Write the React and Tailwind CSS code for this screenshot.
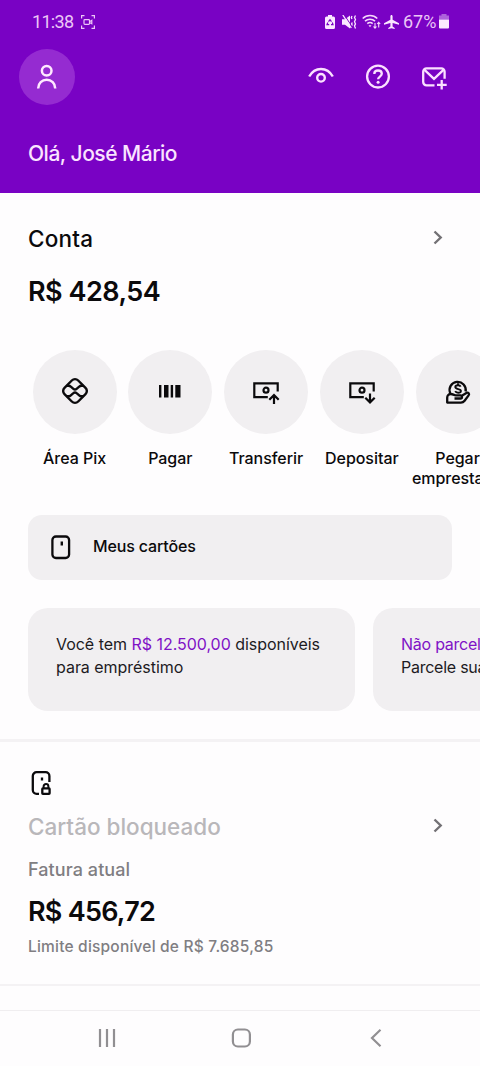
import React from "react";

// Quick actions shown in the horizontal list
const actions = [
  { label: "Área Pix", icon: PixIcon },
  { label: "Pagar", icon: BarcodeIcon },
  { label: "Transferir", icon: TransferIcon },
  { label: "Depositar", icon: DepositIcon },
  { label: "Pegar emprestado", icon: LoanIcon },
];

function PixIcon() {
  return (
    <svg className="-mt-[2px]" width="28" height="28" viewBox="0 0 28 28" fill="none" stroke="#0b0a0c" strokeWidth="2.4" strokeLinejoin="round">
      <path d="M10.8 3.5a4.5 4.5 0 0 1 6.4 0l7.3 7.3a4.5 4.5 0 0 1 0 6.4l-7.3 7.3a4.5 4.5 0 0 1-6.4 0l-7.3-7.3a4.5 4.5 0 0 1 0-6.4z" />
      <path d="M5.8 8.800h1.800c.9 0 1.600.3 2.200.9l2.600 2.200a2.400 2.400 0 0 0 3.200 0l2.600-2.200c.6-.6 1.300-.9 2.200-.9h1.800" />
      <path d="M5.800 19.200h1.800c.9 0 1.600-.3 2.200-.9l2.600-2.200a2.400 2.400 0 0 1 3.200 0l2.600 2.200c.6.6 1.300.9 2.200.9h1.800" />
    </svg>
  );
}

function BarcodeIcon() {
  return (
    <svg className="-mt-px" width="22" height="13" viewBox="0 0 22 13" fill="#0b0a0c">
      <rect x="0" y="0" width="2.4" height="12.5" />
      <rect x="5" y="0" width="4.5" height="12.5" />
      <rect x="11.7" y="0" width="2.4" height="12.5" />
      <rect x="16.3" y="0" width="5.2" height="12.5" />
    </svg>
  );
}

function TransferIcon() {
  return (
    <svg className="-mt-px" width="28" height="24" viewBox="0 0 28 24" fill="none" stroke="#0b0a0c" strokeWidth="2.2">
      <path d="M15.8 17.2H2.3V3.3h23.4v8.2" />
      <circle cx="14" cy="10.2" r="2.5" />
      <path d="M22 24v-8.5M17.3 19.7l4.7-4.6 4.7 4.6" />
    </svg>
  );
}

function DepositIcon() {
  return (
    <svg className="-mt-px" width="28" height="24" viewBox="0 0 28 24" fill="none" stroke="#0b0a0c" strokeWidth="2.2">
      <path d="M15.8 17.2H2.3V3.3h23.4v8.2" />
      <circle cx="14" cy="10.2" r="2.5" />
      <path d="M22 13.5v8.5M17.3 17.8l4.7 4.6 4.7-4.6" />
    </svg>
  );
}

function LoanIcon() {
  return (
    <svg className="-mt-px" width="26" height="26" viewBox="0 0 26 26" fill="none" stroke="#0b0a0c" strokeWidth="2.3" strokeLinejoin="round">
      <path d="M5.2 14.2A8.1 8.1 0 1 1 20.6 12.5" />
      <path d="M15.7 7.6c-.4-.9-1.400-1.400-2.700-1.400-1.600 0-2.700.7-2.700 1.900 0 2.700 5.600 1.300 5.600 3.800 0 1.200-1.200 1.800-2.800 1.800-1.400 0-2.400-.5-2.900-1.500M13 4.300v1.900" strokeWidth="1.9" />
      <path d="M9.5 19.5h6c2 0 2-3.200 0-3.200h-4.700c-1.800 0-3-1.300-4.900-1.300-2.200 0-3.700 1.400-3.700 3.700v4.900h13.700c1.700 0 2.700-.6 3.700-1.900l4-5.300c1.200-1.600-.3-3.400-2.200-2.500l-4.600 2.800" />
    </svg>
  );
}

function CardIcon() {
  return (
    <svg width="20" height="25" viewBox="0 0 20 25" fill="none" stroke="#0b0a0c" strokeWidth="2.3">
      <rect x="1.4" y="1.5" width="16.7" height="21.5" rx="3.5" />
      <path d="M10.8 6.5v4" strokeWidth="2.4" />
    </svg>
  );
}

function BlockedCardIcon() {
  return (
    <svg width="21" height="25" viewBox="0 0 21 25" fill="none" stroke="#0b0a0c" strokeWidth="2.3">
      <path d="M8 22.8H5.6a3.8 3.8 0 0 1-3.8-3.8V5a3.8 3.8 0 0 1 3.8-3.8h9A3.8 3.8 0 0 1 18.4 5v6" />
      <path d="M11 6.5v3" />
      <rect x="11.3" y="17.4" width="7.3" height="5.5" rx=".6" />
      <path d="M12.6 17v-1.5a2.4 2.4 0 0 1 4.8 0V17" strokeWidth="2" />
    </svg>
  );
}

function ChevronRight() {
  return (
    <svg className="-mt-[3px]" width="10" height="15" viewBox="0 0 10 15" fill="none" stroke="#737175" strokeWidth="2.4">
      <path d="M1.5 1.500l6.200 6-6.200 6" />
    </svg>
  );
}

function StatusBar() {
  return (
    <div className="flex h-[43px] items-center justify-between pl-[32px] pr-[31px] text-[#ecc6f6]">
      <div className="flex items-center">
        <span className="w-[49px] whitespace-nowrap font-[Roboto] text-[18px] leading-none tracking-[-0.7px]">11:38</span>
        <svg width="14" height="14" viewBox="0 0 14 14" fill="none" stroke="currentColor" strokeWidth="1.2">
          <path d="M.6 3.5v-2.9h2.9M10.5.6h2.9v2.9M13.4 10.5v2.9h-2.9M3.5 13.4H.6v-2.9" />
          <rect x="3" y="4.7" width="5.5" height="4.6" rx=".8" />
          <path d="M8.5 6.7l2.3-1.4v3.4L8.5 7.5" />
        </svg>
      </div>
      <div className="flex items-center">
        <svg className="mr-[7px]" width="10" height="14" viewBox="0 0 10 14">
          <path d="M3 0h4v1.5h1.5A1.5 1.5 0 0 1 10 3v9.5a1.5 1.5 0 0 1-1.5 1.5h-7A1.5 1.5 0 0 1 0 12.5V3a1.5 1.5 0 0 1 1.5-1.5H3z" fill="#fbe8ff" />
          <path d="M3.5 6.7L5 4.8l1.5 1.9M7.3 7.5l.7 2.2H6M4.2 9.7H2l.8-2.2" fill="none" stroke="#7902c4" strokeWidth="1.2" />
        </svg>
        <svg className="mr-[5px]" width="15" height="14" viewBox="0 0 15 14">
          <path d="M0 4.3h3L8 .5v13L3 9.7H0z" fill="#fbe8ff" />
          <path d="M2-.5l8 12" stroke="#7902c4" strokeWidth="1" />
          <path d="M.8 0l8.5 13" stroke="#fbe8ff" strokeWidth="1.3" />
          <path d="M10 1l-.7 1.5.7 1.5M13.5.5l-1 2 1 2-1 2.200 1 2.200-1 2 1 2.500M10.300 7.500l-.7 1.500.9 1.500" fill="none" stroke="#fbe8ff" strokeWidth="1.3" />
        </svg>
        <svg className="mr-[3px]" width="19" height="15" viewBox="0 0 19 15" fill="none" stroke="#f6d9fb" strokeWidth="1.6">
          <path d="M.7 4.5a10.5 10.5 0 0 1 14.6 0M3 7.2a7.2 7.2 0 0 1 10 0M5.3 9.7a4 4 0 0 1 5.4 0" />
          <path d="M6.5 11.3h3L8 13.3z" fill="#f6d9fb" stroke="none" />
          <path d="M13 9v5M11.5 12.5l1.5 1.7 1.5-1.7M16.7 13.5v-5M15.2 10l1.5-1.7 1.5 1.7" strokeWidth="1.1" />
        </svg>
        <svg className="mr-[4px]" width="15" height="14" viewBox="0 0 15 14" fill="#fbe8ff">
          <path d="M7.5 0c.7 0 1.1.7 1.1 1.5v3.2L15 8.3v1.5L8.6 8v3.5l2.1 1.4V14l-3.2-.8-3.2.8v-1.1l2.1-1.4V8L0 9.8V8.3l6.4-3.6V1.5C6.4.7 6.8 0 7.5 0z" />
        </svg>
        <span className="w-[36px] whitespace-nowrap font-[Roboto] text-[18px] leading-none">67%</span>
        <svg width="10" height="15" viewBox="0 0 10 15">
          <path d="M2.5 0h5v1.5H10V5.5H0V1.5h2.5z" fill="#ad62dc" />
          <path d="M0 5.5h10v8a1 1 0 0 1-1 1H1a1 1 0 0 1-1-1z" fill="#fcebff" />
        </svg>
      </div>
    </div>
  );
}

function Header() {
  return (
    <header className="h-[193px] bg-[#7902c4]">
      <StatusBar />
      <div className="flex items-center justify-between pl-[19px] pr-[33px] pt-[6px]">
        <div className="flex h-14 w-14 items-center justify-center rounded-full bg-[#952bd1]">
          <svg className="-mt-px" width="22" height="26" viewBox="0 0 22 26" fill="none" stroke="#ffe9ff" strokeWidth="2.5">
            <circle cx="10.7" cy="6.7" r="4.8" />
            <path d="M2.2 24.6v-.4a8.5 8.5 0 0 1 17 0v.4" />
          </svg>
        </div>
        <div className="flex items-center">
          <svg className="mr-[31px]" width="26" height="24" viewBox="0 0 26 24" fill="none" stroke="#fbe0ff" strokeWidth="2.4">
            <path d="M1.2 11.5C4 6.5 8.2 4 13 4S22 6.500 24.800 11.500" />
            <circle cx="13" cy="12.8" r="3.8" />
          </svg>
          <svg className="mr-[31px]" width="26" height="26" viewBox="0 0 26 26" fill="none" stroke="#fbe0ff" strokeWidth="2.3">
            <circle cx="13" cy="12.6" r="10.9" />
            <path d="M9.3 10c0-2 1.5-3.5 3.7-3.5s3.8 1.3 3.8 3.3c0 2.6-3.7 2.9-3.7 5.4" />
            <circle cx="13.1" cy="18.2" r="1.5" fill="#fbe0ff" stroke="none" />
          </svg>
          <svg width="25" height="25" viewBox="0 0 25 25" fill="none" stroke="#fbe0ff" strokeWidth="2.3">
            <path d="M12.5 20.3H4.5a3.3 3.3 0 0 1-3.3-3.3V6.7a3.3 3.3 0 0 1 3.3-3.3h14.8a3.3 3.3 0 0 1 3.3 3.3v7" />
            <path d="M2.5 4.8L12 13.8l9.5-9M19.7 15v9.5M15 19.8h9.7" />
          </svg>
        </div>
      </div>
      <h1 className="pl-[28px] pt-[35px] text-[21px] font-medium leading-[28px] tracking-[-0.5px] text-[#fbe4ff]">
        Olá, José Mário
      </h1>
    </header>
  );
}

function App() {
  return (
    <div className="flex h-[1066px] w-[480px] flex-col overflow-hidden bg-[#fefdfe] font-[Inter,sans-serif] text-[#0b0a0c]">
      <Header />

      {/* Account */}
      <section className="h-[546px] shrink-0 overflow-hidden pt-[32px]">
        <div className="flex h-[28px] items-center justify-between pl-[28px] pr-[37px]">
          <h2 className="text-[22.5px] font-medium leading-[28px] tracking-[0.2px]">Conta</h2>
          <ChevronRight />
        </div>
        <p className="mt-[21px] pl-[28px] text-[27px] font-semibold leading-[36px] tracking-[-0.5px]">R$ 428,54</p>

        {/* Quick actions */}
        <div className="mt-[40px] flex h-[144px] pl-[26.7px]">
          {actions.map(({ label, icon: Icon }) => (
            <div key={label} className="flex w-[95.75px] shrink-0 flex-col items-center">
              <div className="flex h-[84px] w-[84px] items-center justify-center rounded-full bg-[#f1eff1]">
                <Icon />
              </div>
              <span className="mt-[14px] text-center text-[16px] font-medium leading-[20px] tracking-[-0.05px]">{label}</span>
            </div>
          ))}
        </div>

        <div className="mx-[28px] mt-[21px] flex h-[65px] items-center rounded-[14px] bg-[#f1eff1] pl-[23px]">
          <CardIcon />
          <span className="-mt-[3px] ml-[22px] text-[16px] font-medium leading-[20px] tracking-[-0.15px]">Meus cartões</span>
        </div>

        {/* Offers */}
        <div className="mt-[28px] flex gap-[18px] pl-[28px] text-[16px] leading-[23px] text-[#1d1b1f]">
          <div className="h-[103px] w-[327px] shrink-0 whitespace-nowrap rounded-[20px] bg-[#f1eff1] pl-[28px] pt-[25px] tracking-[-0.03px]">
            Você tem <span className="text-[#7f12c6]">R$ 12.500,00</span> disponíveis
            <br />
            para empréstimo
          </div>
          <div className="h-[103px] w-[327px] shrink-0 whitespace-nowrap rounded-[20px] bg-[#f1eff1] pl-[28px] pt-[25px] tracking-[-0.25px]">
            <span className="text-[#7f12c6]">Não parcele</span>
            <br />
            Parcele suas
          </div>
        </div>
      </section>

      {/* Credit card */}
      <section className="h-[247px] shrink-0 border-b-2 border-t-[3px] border-[#f4f2f4] pt-[29px]">
        <div className="pl-[31px]">
          <BlockedCardIcon />
        </div>
        <div className="mt-[17px] flex h-[28px] items-center justify-between pl-[28px] pr-[37px]">
          <h2 className="text-[22.5px] font-medium leading-[28px] text-[#b9b7ba]">Cartão bloqueado</h2>
          <ChevronRight />
        </div>
        <div className="pl-[28px]">
          <p className="mt-[17px] text-[18px] font-medium leading-[24px] tracking-[0.08px] text-[#807e82]">Fatura atual</p>
          <p className="mt-[12px] text-[27px] font-semibold leading-[36px] tracking-[-0.75px]">R$ 456,72</p>
          <p className="mt-[7px] text-[15.5px] font-medium leading-[20px] tracking-[0.2px] text-[#807e82]">Limite disponível de R$ 7.685,85</p>
        </div>
      </section>

      {/* System navigation */}
      <nav className="mt-[24px] flex h-[56px] shrink-0 items-center border-t border-[#f0eef0] pb-px pl-[98px]">
        <svg width="18" height="18" viewBox="0 0 18 18" stroke="#918f92" strokeWidth="2.2">
          <path d="M2 0v18M9 0v18M16 0v18" />
        </svg>
        <svg className="ml-[115px]" width="21" height="20" viewBox="0 0 21 20" fill="none" stroke="#918f92" strokeWidth="2.2">
          <rect x="1.9" y="1.5" width="17" height="17" rx="5" />
        </svg>
        <svg className="ml-[118px]" width="12" height="18" viewBox="0 0 12 18" fill="none" stroke="#918f92" strokeWidth="2.2">
          <path d="M10.5.8L2 9l8.5 8.2" />
        </svg>
      </nav>
    </div>
  );
}

export default App;
